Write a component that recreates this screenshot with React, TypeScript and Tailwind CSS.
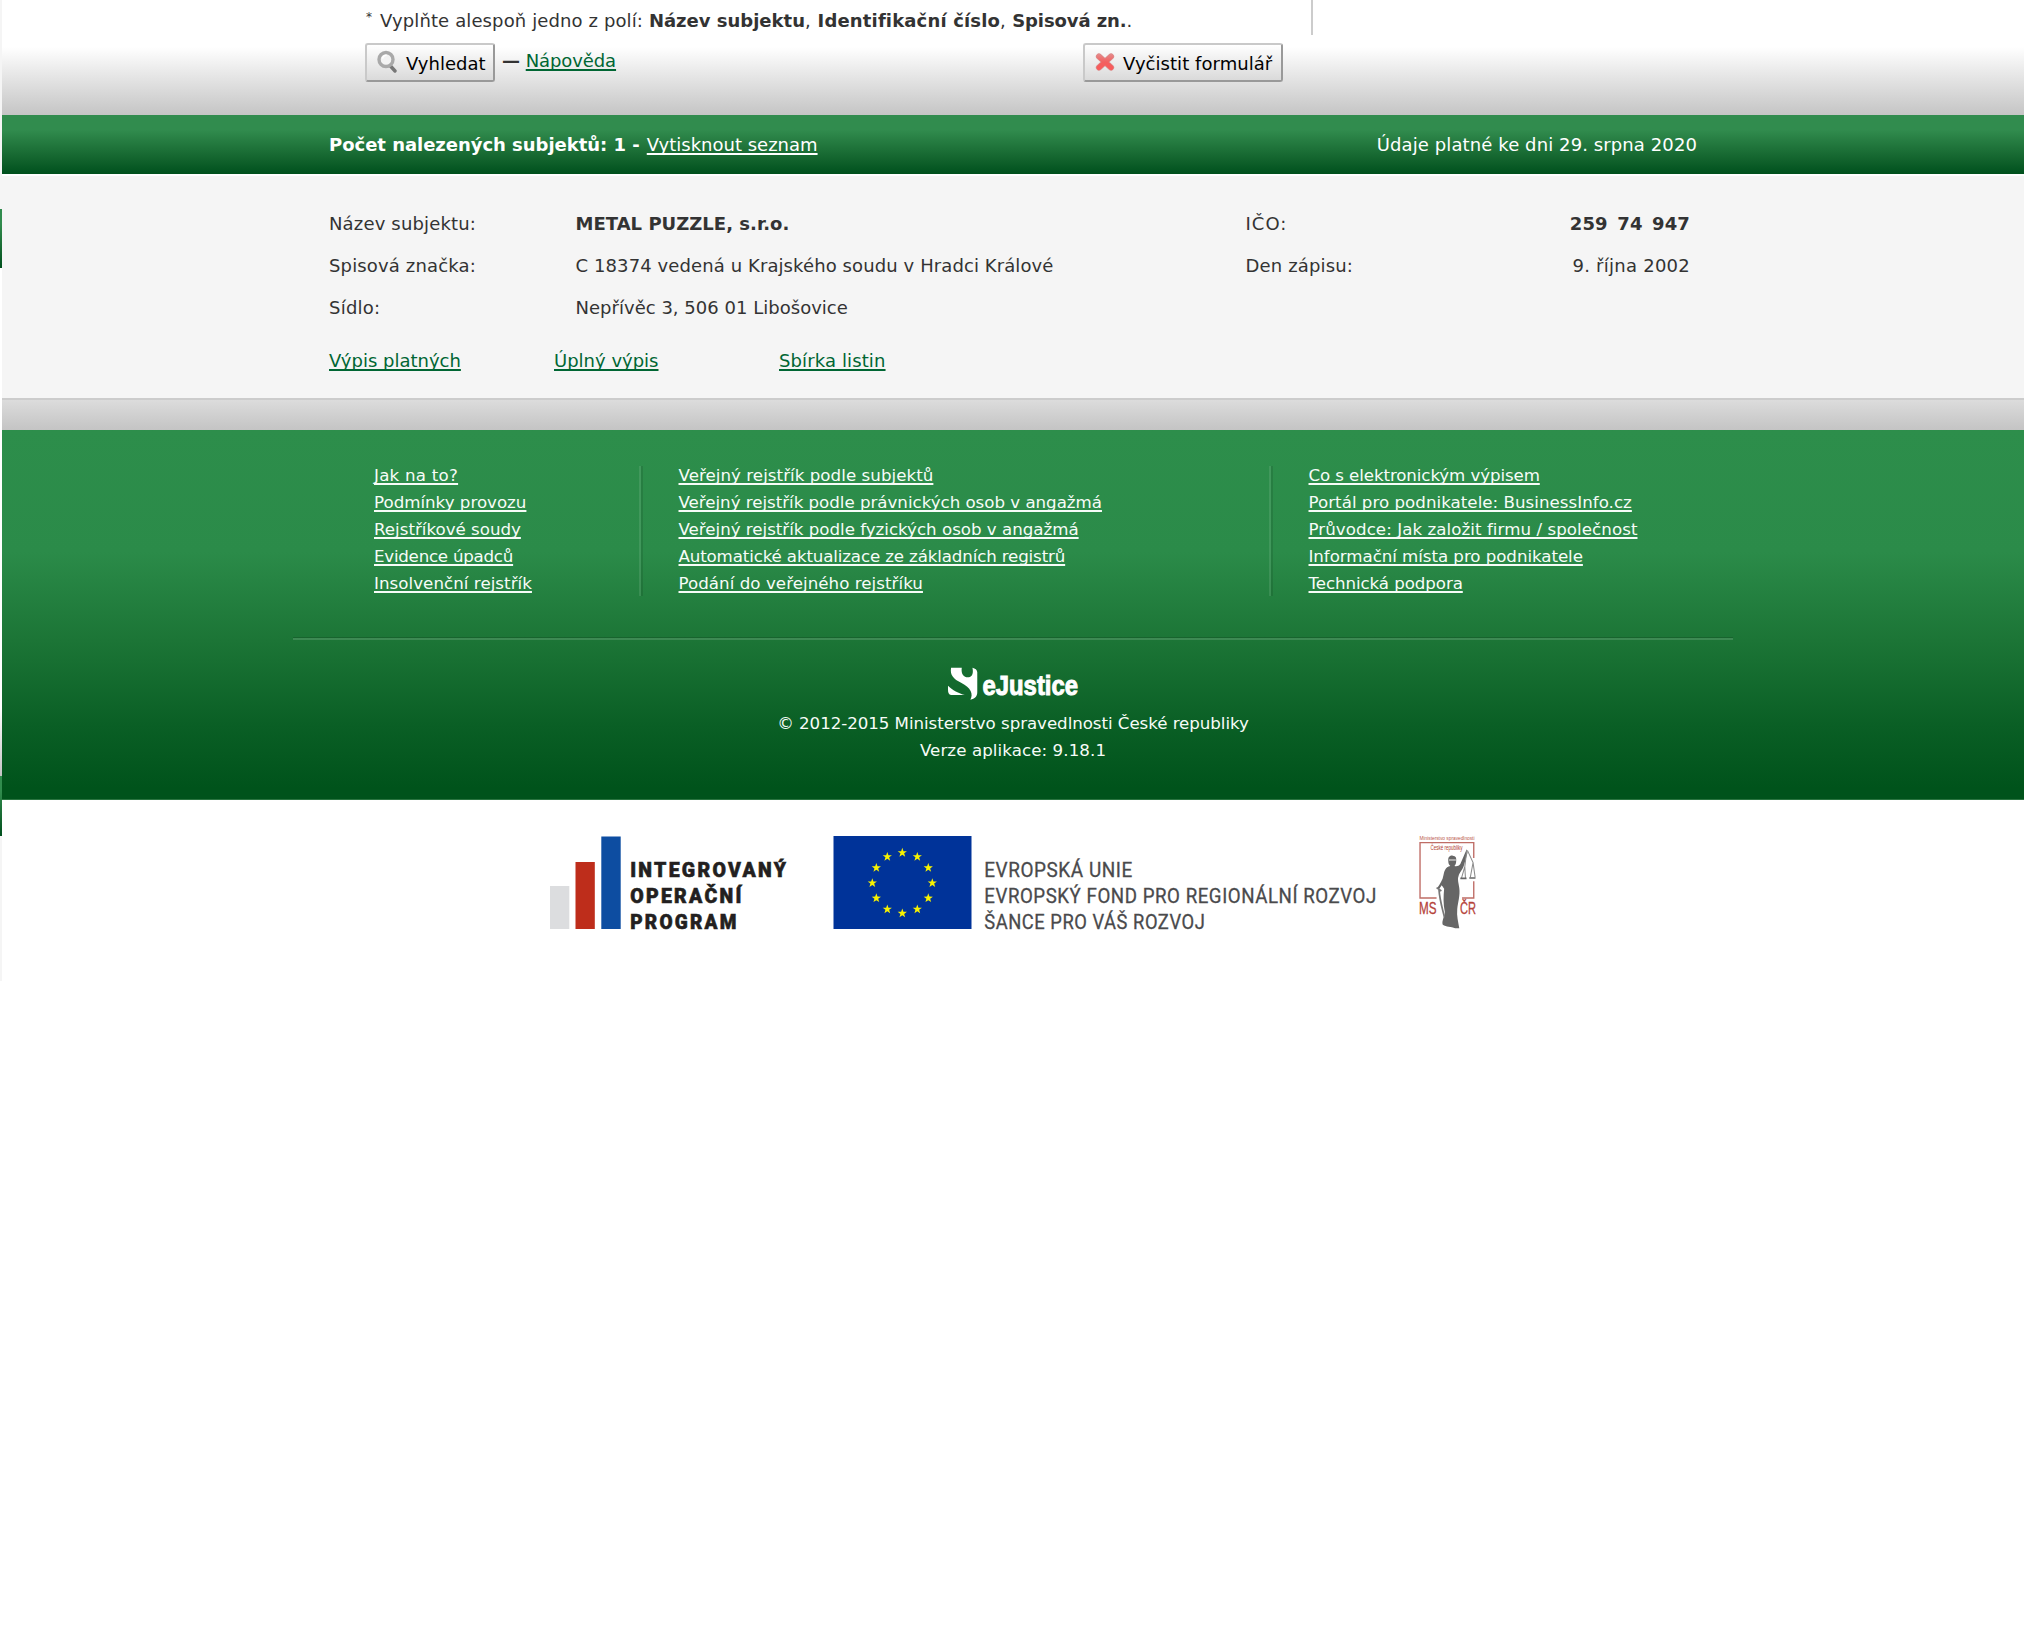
import type { ReactNode } from 'react';

type FooterLink = { label: string; tracking?: string };

const footerColumns: FooterLink[][] = [
  [
    { label: 'Jak na to?', tracking: 'tracking-[0.24px]' },
    { label: 'Podmínky provozu' },
    { label: 'Rejstříkové soudy' },
    { label: 'Evidence úpadců', tracking: 'tracking-[-0.24px]' },
    { label: 'Insolvenční rejstřík', tracking: 'tracking-[0.05px]' },
  ],
  [
    { label: 'Veřejný rejstřík podle subjektů', tracking: 'tracking-[0.05px]' },
    { label: 'Veřejný rejstřík podle právnických osob v angažmá', tracking: 'tracking-[-0.02px]' },
    { label: 'Veřejný rejstřík podle fyzických osob v angažmá', tracking: 'tracking-[-0.01px]' },
    { label: 'Automatické aktualizace ze základních registrů', tracking: 'tracking-[-0.14px]' },
    { label: 'Podání do veřejného rejstříku', tracking: 'tracking-[0.05px]' },
  ],
  [
    { label: 'Co s elektronickým výpisem', tracking: 'tracking-[-0.1px]' },
    { label: 'Portál pro podnikatele: BusinessInfo.cz', tracking: 'tracking-[0.03px]' },
    { label: 'Průvodce: Jak založit firmu / společnost', tracking: 'tracking-[0.06px]' },
    { label: 'Informační místa pro podnikatele', tracking: 'tracking-[-0.05px]' },
    { label: 'Technická podpora', tracking: 'tracking-[-0.08px]' },
  ],
];

function Link({ children, className = '' }: { children: ReactNode; className?: string }) {
  return (
    <a
      href="#"
      className={`underline decoration-2 underline-offset-2 [text-decoration-skip-ink:none] ${className}`}
    >
      {children}
    </a>
  );
}

function FormButton({ icon, children, className }: { icon: ReactNode; children: ReactNode; className: string }) {
  return (
    <button
      className={`flex h-[39px] items-center rounded-[3px] border-2 border-t-[#c9c9c9] border-r-[#999] border-b-[#999] border-l-[#c9c9c9] bg-linear-to-b from-white to-[#dadada] whitespace-nowrap text-black ${className}`}
    >
      {icon}
      <span className="pt-px">{children}</span>
    </button>
  );
}

function SearchIcon() {
  return (
    <svg width="20" height="24" viewBox="0 0 20 24" className="mr-[9px] mb-[2px] shrink-0">
      <path d="M13 15.5 L18 21" stroke="#777" strokeWidth="3.4" strokeLinecap="round" />
      <circle cx="9" cy="9.5" r="7" fill="#f3f3f3" stroke="#a9a9a9" strokeWidth="3.4" />
      <path d="M5.6 8.6 a4 4 0 0 1 4-3.4" stroke="#fff" strokeWidth="1.5" fill="none" />
    </svg>
  );
}

function ClearIcon() {
  return (
    <svg width="20" height="20" viewBox="0 0 20 20" className="mr-[8px] mb-px shrink-0">
      <defs>
        <linearGradient id="clear" x1="0" y1="0" x2="0" y2="20" gradientUnits="userSpaceOnUse">
          <stop offset="0.1" stopColor="#e58a8a" />
          <stop offset="0.5" stopColor="#f26060" />
          <stop offset="0.9" stopColor="#fa5a5a" />
        </linearGradient>
      </defs>
      <path d="M4 4.5 L16 15.5 M16 4.5 L4 15.5" stroke="#d98c8c" strokeWidth="6.2" strokeLinecap="round" />
      <path d="M4 4.5 L16 15.5 M16 4.5 L4 15.5" stroke="url(#clear)" strokeWidth="5" strokeLinecap="round" />
    </svg>
  );
}

function EJusticeLogo() {
  return (
    <svg width="132" height="36" viewBox="0 0 132 36" fill="#fff" className="overflow-visible">
      <g transform="scale(0.34435 0.33333) translate(-603 -84)">
        <path d="M612 86 L643 86 C640 106 650 115 660 115 C672 115 678 105 674 86 C682 88 688 92 688 100 L688 160 C688 172 681 180 668 182 C677 165 670 146 641 131 C619 120 608 108 612 86Z" />
        <path d="M603 140 C615 153 635 163 652 168 L612 168 C605 167 603 160 603 152Z" />
      </g>
      <text
        x="34.5"
        y="27.5"
        fontSize="28.5"
        fontWeight="700"
        fontFamily="'Liberation Sans', sans-serif"
        textLength="95.5"
        lengthAdjust="spacingAndGlyphs"
        stroke="#fff"
        strokeWidth="1"
      >
        eJustice
      </text>
    </svg>
  );
}

function IopLogo() {
  const lines: [string, number, number][] = [
    ['INTEGROVANÝ', 41, 158],
    ['OPERAČNÍ', 66.5, 113.5],
    ['PROGRAM', 92.5, 108.5],
  ];
  return (
    <svg width="240" height="94" viewBox="0 0 240 94" className="overflow-visible">
      <rect x="0" y="50" width="19.3" height="43" fill="#dcdddf" />
      <rect x="25.5" y="26" width="19.3" height="67" fill="#be2d1b" />
      <rect x="51.3" y="0.5" width="19.4" height="92.5" fill="#0d4da1" />
      {lines.map(([text, y, width]) => (
        <text
          key={text}
          x="80.2"
          y={y}
          fontSize="20.5"
          fontWeight="900"
          fontFamily="Roboto, sans-serif"
          fill="#231f20"
          stroke="#231f20"
          strokeWidth="0.6"
          letterSpacing="2.4"
          textLength={width}
          lengthAdjust="spacingAndGlyphs"
        >
          {text}
        </text>
      ))}
    </svg>
  );
}

const star = 'M0 -4.4 L1.05 -1.4 L4.2 -1.36 L1.7 0.55 L2.6 3.6 L0 1.8 L-2.6 3.6 L-1.7 0.55 L-4.2 -1.36 L-1.05 -1.4Z';

function EuLogo() {
  const lines: [string, number, number][] = [
    ['EVROPSKÁ UNIE', 41, 148.5],
    ['EVROPSKÝ FOND PRO REGIONÁLNÍ ROZVOJ', 66.5, 392.5],
    ['ŠANCE PRO VÁŠ ROZVOJ', 92.5, 221],
  ];
  return (
    <svg width="548" height="94" viewBox="0 0 548 94" className="overflow-visible">
      <rect x="0.5" y="0" width="138" height="93" fill="#039" />
      {Array.from({ length: 12 }, (_, i) => {
        const a = (i * Math.PI) / 6;
        return (
          <path
            key={i}
            d={star}
            fill="#f8f300"
            transform={`translate(${69.3 + 30 * Math.sin(a)} ${47 - 30.3 * Math.cos(a)}) scale(1.1)`}
          />
        );
      })}
      {lines.map(([text, y, width]) => (
        <text
          key={text}
          x="151.3"
          y={y}
          fontSize="20.5"
          fontFamily="Roboto, sans-serif"
          fill="#4a4a4c"
          stroke="#4a4a4c"
          strokeWidth="0.3"
          letterSpacing="0.6"
          textLength={width}
          lengthAdjust="spacingAndGlyphs"
        >
          {text}
        </text>
      ))}
    </svg>
  );
}

function MinistryLogo() {
  return (
    <svg
      width="58"
      height="94"
      viewBox="0 0 58 94"
      fontFamily="'Liberation Sans', sans-serif"
      className="overflow-visible"
    >
      <text x="0.5" y="3.8" fontSize="5" fill="#b9564b" textLength="55" lengthAdjust="spacingAndGlyphs">
        Ministerstvo spravedlnosti
      </text>
      <text x="11.5" y="14" fontSize="6.4" fill="#b03a2e" textLength="32" lengthAdjust="spacingAndGlyphs">
        České republiky
      </text>
      <g transform="scale(0.34435 0.33333) translate(-1333 -48)">
        <path
          d="M1384 234 H1336 V68 H1492 V114 M1492 184 V234 H1458"
          fill="none"
          stroke="#bf6d66"
          strokeWidth="4"
        />
        <path
          d="M1418 122 C1417 110 1424 106 1431 107 C1440 108 1442 114 1441 122 C1441 130 1439 134 1436 138 C1442 140 1449 138 1453 132 L1468 96 L1472 88 L1474 98 L1463 138 C1458 152 1450 158 1448 168 C1444 178 1448 188 1450 204 C1453 226 1446 246 1444 268 C1442 288 1447 306 1450 325 L1438 325 C1426 318 1412 322 1402 314 C1398 302 1408 290 1408 276 C1403 250 1404 230 1406 206 L1399 196 L1391 208 L1386 204 C1394 192 1402 180 1404 166 C1407 152 1409 142 1424 138 C1420 134 1418 130 1418 122Z"
          fill="#666"
        />
        <path
          d="M1384 203 L1398 213 M1391 208 C1393 240 1400 262 1407 292"
          fill="none"
          stroke="#777"
          strokeWidth="5"
        />
        <path d="M1420 120 H1440" stroke="#ccc" strokeWidth="4" />
        <path
          d="M1472 90 L1466 140 L1456 176 M1466 140 L1468 176 M1474 92 L1490 128 L1482 172 M1490 128 L1496 172"
          fill="none"
          stroke="#8b8b8b"
          strokeWidth="3"
        />
        <path d="M1453 175 H1471 M1479 174 H1497" stroke="#666" strokeWidth="5" />
      </g>
      <text x="0" y="78" fontSize="16.5" fill="#b5433a" stroke="#b5433a" strokeWidth="0.3" textLength="17.5" lengthAdjust="spacingAndGlyphs">
        MS
      </text>
      <text x="41" y="78" fontSize="16.5" fill="#b5433a" stroke="#b5433a" strokeWidth="0.3" textLength="16" lengthAdjust="spacingAndGlyphs">
        ČR
      </text>
    </svg>
  );
}

function EdgeStrip() {
  return (
    <div className="flex w-[2px] shrink-0 flex-col">
      <div className="h-[209px] bg-[#f5f5f5]" />
      <div className="h-[59px] bg-linear-to-b from-[#318c4e] from-25% to-[#00501d]" />
      <div className="h-[440px] bg-white" />
      <div className="h-[68px] bg-linear-to-b from-white to-[#c4c4c4]" />
      <div className="h-[60px] bg-linear-to-b from-[#318c4e] from-25% to-[#00501d]" />
      <div className="h-[145px] bg-[#f5f5f5]" />
    </div>
  );
}

export default function App() {
  return (
    <div className="flex h-[1644px] w-[2024px] overflow-hidden bg-white font-['DejaVu_Sans',sans-serif] text-[18px] leading-[21px] text-[#333]">
      <EdgeStrip />
      <div className="flex min-w-0 flex-1 flex-col">
        <section className="h-[115px] bg-linear-to-b from-white from-[47px] to-[#c5c5c5]">
          <div className="ml-[363px] flex h-[35px] w-[948px] border-r-2 border-[#ccc] pt-[10px] whitespace-nowrap">
            <span className="w-[15px] pl-px text-[12px] leading-[15px]">*</span>
            <p>
              <span className="tracking-[0.12px]">Vyplňte alespoň jedno z polí: </span>
              <b>Název subjektu</b>
              <span className="tracking-[0.6px]">, </span>
              <b className="tracking-[0.15px]">Identifikační číslo</b>
              <span className="tracking-[0.4px]">, </span>
              <b className="tracking-[-0.1px]">Spisová zn.</b>.
            </p>
          </div>
          <div className="mt-[8px] ml-[363px] flex w-[918px] items-start">
            <FormButton icon={<SearchIcon />} className="w-[130px] pl-[10px]">
              Vyhledat
            </FormButton>
            <p className="pt-[7px] pl-[7px]">
              <b>—</b> <Link className="text-[#006633] tracking-[-0.1px]">Nápověda</Link>
            </p>
            <FormButton icon={<ClearIcon />} className="ml-auto w-[200px] pl-[10px] tracking-[0.05px]">
              Vyčistit formulář
            </FormButton>
          </div>
        </section>

        <header className="flex h-[59px] items-center justify-between bg-linear-to-b from-[#318c4e] from-25% to-[#00501d] pr-[327px] pl-[327px] text-white">
          <p>
            <b className="tracking-[-0.03px]">Počet nalezených subjektů: 1 </b>
            <b className="tracking-[0.4px]">- </b>
            <Link>Vytisknout seznam</Link>
          </p>
          <p className="tracking-[0.1px]">Údaje platné ke dni 29. srpna 2020</p>
        </header>

        <section className="h-[226px] border-t-2 border-b-2 border-t-white border-b-[#ccc] bg-[#f5f5f5] pt-[27px] pl-[327px] tracking-[0.1px]">
          <div className="grid w-[1361px] grid-cols-[246.5px_670px_1fr_auto] leading-[42px]">
            <span className="tracking-[0.16px]">Název subjektu:</span>
            <b className="tracking-[0.02px]">METAL PUZZLE, s.r.o.</b>
            <span className="tracking-[1px]">IČO:</span>
            <b className="text-right tracking-[0.15px] [word-spacing:3px]">259 74 947</b>
            <span className="tracking-[0.15px]">Spisová značka:</span>
            <span>C 18374 vedená u Krajského soudu v Hradci Králové</span>
            <span className="tracking-[0.15px]">Den zápisu:</span>
            <span className="text-right tracking-[0.25px]">9. října 2002</span>
            <span className="tracking-[0.25px]">Sídlo:</span>
            <span className="tracking-[0.02px]">Nepřívěc 3, 506 01 Libošovice</span>
          </div>
          <div className="mt-[11px] grid grid-cols-[225px_225px_225px] leading-[42px] tracking-normal text-[#006633]">
            <Link>Výpis platných</Link>
            <Link>Úplný výpis</Link>
            <Link className="tracking-[0.12px]">Sbírka listin</Link>
          </div>
        </section>
        <div className="h-[30px] bg-linear-to-b from-[#dcdcdc] to-[#c4c4c4]" />

        <footer className="flex h-[370px] flex-col items-center border-b border-[#2a7440] bg-[linear-gradient(to_bottom,#2d8e4b_0%,#2b8b49_33%,#1c7536_57%,#0a5f25_80%,#00531b_97%)] text-[16.66px] leading-[27px] text-[#f7fcf8]">
          <div className="flex h-[207px] w-[1440px] pt-[36px] pl-[81px]">
            {footerColumns.map((column, i) => (
              <div key={column[0].label} className={['flex w-[304.5px]', 'flex w-[630px]', 'flex'][i]}>
                <ul className="-mt-[4px] flex-1 whitespace-nowrap">
                  {column.map(({ label, tracking }) => (
                    <li key={label}>
                      <Link className={tracking}>{label}</Link>
                    </li>
                  ))}
                </ul>
                {i < 2 && (
                  <div className="mr-[36px] h-[130px] w-[4px] border-r-2 border-l-2 border-r-black/10 border-l-white/10" />
                )}
              </div>
            ))}
          </div>
          <div className="h-[3px] w-[1440px] border-t border-b-2 border-t-black/15 border-b-white/15" />
          <div className="mt-[27px] -mr-px h-[36px]">
            <EJusticeLogo />
          </div>
          <p className="mt-[7px] tracking-[-0.05px]">© 2012-2015 Ministerstvo spravedlnosti České republiky</p>
          <p className="tracking-[0.08px]">Verze aplikace: 9.18.1</p>
        </footer>

        <div className="mt-[36px] flex pl-[548px]">
          <IopLogo />
          <div className="ml-[43px]">
            <EuLogo />
          </div>
          <div className="ml-[38px]">
            <MinistryLogo />
          </div>
        </div>
      </div>
    </div>
  );
}
